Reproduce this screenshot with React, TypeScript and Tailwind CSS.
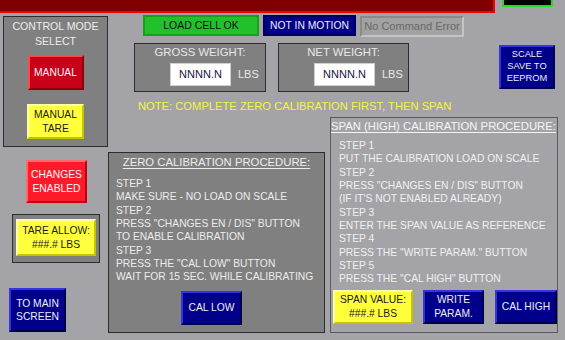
import React from "react";

type Tone = "navy" | "red" | "bright" | "yellow";

const tones: Record<Tone, string> = {
  navy: "bg-[#00008a] border-t-[#3434e0] border-l-[#3434e0] border-r-[#00004a] border-b-[#00004a] text-[#eeeeee]",
  red: "bg-[#c8001a] border-t-[#ff4848] border-l-[#ff4848] border-r-[#8a0010] border-b-[#8a0010] text-[#f4f4f4]",
  bright: "bg-[#ff1a2a] border-t-[#ff6a6a] border-l-[#ff6a6a] border-r-[#c00010] border-b-[#c00010] text-[#f8f8f8]",
  yellow: "bg-[#ffff3c] border-t-[#ffffa8] border-l-[#ffffa8] border-r-[#c4c400] border-b-[#c4c400] text-[#202020]",
};

const Btn = ({ tone, className, children }: { tone: Tone; className: string; children: React.ReactNode }) => (
  <div className={`${tones[tone]} ${className} border-2 flex items-center justify-center text-center whitespace-nowrap`}>
    <span>{children}</span>
  </div>
);

const WeightBox = ({ title, className }: { title: string; className: string }) => (
  <div className={`${className} h-[49px] bg-[#808080] border border-[#2c2c2c] flex flex-col text-[11.3px]`}>
    <div className="pt-[2px] text-center leading-[13px] text-[#e8e8e8]">{title}</div>
    <div className="mt-[4px] flex items-center pl-[35px] text-[11px]">
      <div className="w-[61px] h-[23px] bg-white border border-[#d0d0d0] flex items-center justify-center text-[#15154a]">
        NNNN.N
      </div>
      <span className="ml-[7px] text-[#e8e8e8]">LBS</span>
    </div>
  </div>
);

const zeroSteps = [
  "STEP 1",
  "MAKE SURE - NO LOAD ON SCALE",
  "STEP 2",
  'PRESS "CHANGES EN / DIS" BUTTON',
  "TO ENABLE CALIBRATION",
  "STEP 3",
  'PRESS THE "CAL LOW" BUTTON',
  "WAIT FOR 15 SEC. WHILE CALIBRATING",
];

const spanSteps = [
  "STEP 1",
  "PUT THE CALIBRATION LOAD ON SCALE",
  "STEP 2",
  'PRESS "CHANGES EN / DIS" BUTTON',
  "(IF IT'S NOT ENABLED ALREADY)",
  "STEP 3",
  "ENTER THE SPAN VALUE AS REFERENCE",
  "STEP 4",
  'PRESS THE "WRITE PARAM." BUTTON',
  "STEP 5",
  'PRESS THE "CAL HIGH" BUTTON',
];

export default function App() {
  return (
    <div className="w-[565px] h-[340px] overflow-hidden bg-[#a4a4a8] font-['Liberation_Sans',Arial,sans-serif] text-[10.3px] leading-[13.5px]">
      {/* alarm banner */}
      <div className="flex h-[13px]">
        <div className="w-[495px] h-[13px] bg-[#800000] border-b-2 border-r-2 border-[#f00000]" />
        <div className="ml-[7px] w-[51px] h-[7px] bg-black border-2 border-t-0 border-[#22dd22]" />
      </div>

      <div className="flex">
        {/* left column */}
        <div className="ml-[3px] mt-[3px] w-[105px] shrink-0 flex flex-col">
          <div className="h-[131px] bg-[#808080] border border-[#2c2c2c] flex flex-col items-center">
            <div className="mt-[2px] text-center text-[10.6px] leading-[14.5px] text-[#ececec]">
              CONTROL MODE
              <br />
              SELECT
            </div>
            <Btn tone="red" className="mt-[7px] w-[56px] h-[35px]">MANUAL</Btn>
            <Btn tone="yellow" className="mt-[14px] w-[57px] h-[35px]">
              MANUAL
              <br />
              TARE
            </Btn>
          </div>
          <Btn tone="bright" className="mt-[13px] ml-[23px] w-[61px] h-[43px] leading-[14px]">
            CHANGES
            <br />
            ENABLED
          </Btn>
          <div className="mt-[11px] ml-[9px] w-[88px] h-[49px] bg-[#808080] border border-[#2c2c2c] pt-[4px] pl-[3px]">
            <Btn tone="yellow" className="w-[80px] h-[37px]">
              TARE ALLOW:
              <br />
              ###.# LBS
            </Btn>
          </div>
          <Btn tone="navy" className="mt-[25px] ml-[6px] w-[57px] h-[44px]">
            TO MAIN
            <br />
            SCREEN
          </Btn>
        </div>

        {/* right area */}
        <div className="flex-1 flex flex-col">
          <div className="mt-[2px] ml-[35px] flex items-start">
            <div className="w-[116px] h-[21px] bg-[#22c02a] border-2 border-[#18a018] flex items-center justify-center text-[#101010] text-[10.5px]">
              LOAD CELL OK
            </div>
            <div className="ml-[4px] w-[93px] h-[21px] bg-[#000088] border-2 border-[#00005c] flex items-center justify-center text-[#f0f0f0]">
              NOT IN MOTION
            </div>
            <div className="ml-[4px] mt-[1px] w-[104px] h-[21px] bg-[#a2a2a2] border-2 border-t-[#8a8a8a] border-l-[#8a8a8a] border-r-[#c4c4c4] border-b-[#c4c4c4] flex items-center justify-center text-[#686868] text-[11px] whitespace-nowrap">
              No Command Error
            </div>
          </div>

          <div className="mt-[6px] flex items-start">
            <WeightBox title="GROSS WEIGHT:" className="ml-[26px] w-[132px]" />
            <WeightBox title="NET WEIGHT:" className="ml-[12px] w-[131px]" />
            <Btn tone="navy" className="ml-[90px] mt-[2px] w-[56px] h-[44px] text-[9.3px] leading-[11.7px]">
              SCALE
              <br />
              SAVE TO
              <br />
              EEPROM
            </Btn>
          </div>

          <div className="mt-[7px] ml-[30px] leading-[14px] text-[11.2px] text-[#f4f43c] whitespace-nowrap">
            NOTE: COMPLETE ZERO CALIBRATION FIRST, THEN SPAN
          </div>

          <div className="mt-[4px] flex items-start">
            <div className="mt-[35px] w-[217px] h-[181px] bg-[#808080] border border-[#2c2c2c] flex flex-col">
              <div className="mt-[2px] text-center text-[11.3px] leading-[14px] text-[#ececec] underline underline-offset-2 whitespace-nowrap">
                ZERO CALIBRATION PROCEDURE:
              </div>
              <div className="mt-[8px] ml-[7px] text-[#ececec] leading-[13.33px] whitespace-nowrap">
                {zeroSteps.map((s) => (
                  <div key={s}>{s}</div>
                ))}
              </div>
              <Btn tone="navy" className="mt-[7px] ml-[72px] w-[61px] h-[34px]">CAL LOW</Btn>
            </div>

            <div className="ml-[5px] w-[228px] h-[216px] bg-[#a4a4a8] border border-[#5a5a5a] flex flex-col">
              <div className="mt-[1px] text-[11.3px] leading-[14px] text-[#f4f4f4] underline underline-offset-2 whitespace-nowrap">
                SPAN (HIGH) CALIBRATION PROCEDURE:
              </div>
              <div className="mt-[6px] ml-[8px] text-[#f0f0f0] leading-[13.33px] whitespace-nowrap">
                {spanSteps.map((s) => (
                  <div key={s}>{s}</div>
                ))}
              </div>
              <div className="mt-[4px] ml-[2px] flex">
                <Btn tone="yellow" className="w-[80px] h-[34px]">
                  SPAN VALUE:
                  <br />
                  ###.# LBS
                </Btn>
                <Btn tone="navy" className="ml-[10px] w-[61px] h-[34px]">
                  WRITE
                  <br />
                  PARAM.
                </Btn>
                <Btn tone="navy" className="ml-[11px] w-[62px] h-[34px]">CAL HIGH</Btn>
              </div>
            </div>
          </div>
        </div>
      </div>
    </div>
  );
}
